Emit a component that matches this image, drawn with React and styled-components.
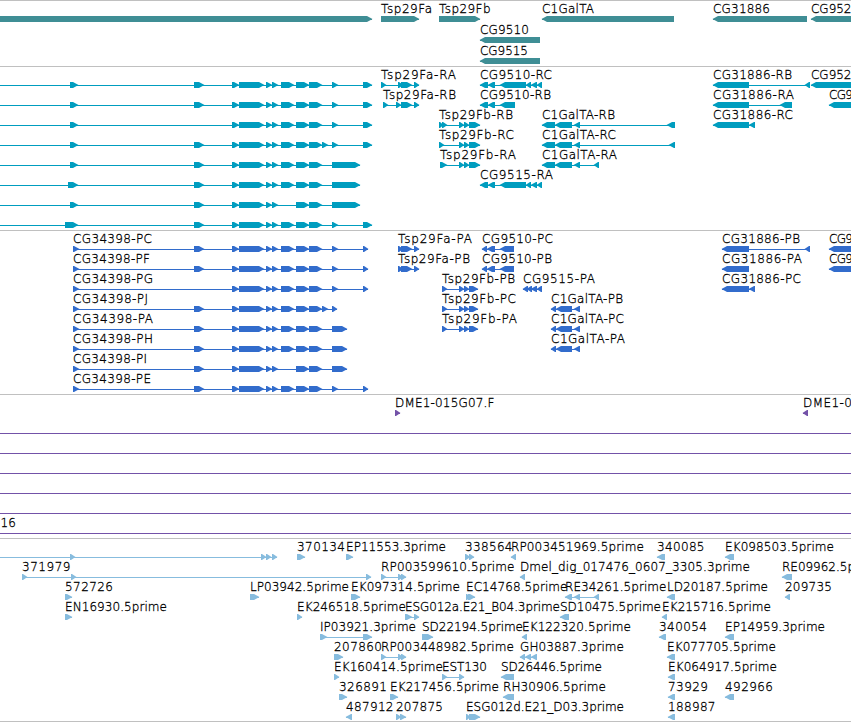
import React from 'react';
import styled, { createGlobalStyle } from 'styled-components';

const VIEW_WIDTH = 851;
const FONT = '200 12px "DejaVu Sans Light", "DejaVu Sans"';

// exons shared by the CG34398 transcripts
const CORE = [[232, 239], [239, 264], [266, 272], [272, 278], [281, 294], [296, 309], [309, 322]];
const CORE_SHORT = CORE.filter(([start]) => start !== 281);

// feature: name, label start, label end, strand, exons, line start (when it differs from the first exon)
const f = (name, x, end, strand, exons, from) => ({ name, x, end, strand, exons, from });
const main = (exons) => f('', 0, 0, 1, exons, -5);

const genes = [
  [
    f('', 0, 0, 1, [[-5, 372]]),
    f('Tsp29Fa', 381, 432, 1, [[381, 419]]),
    f('Tsp29Fb', 439, 490.5, 1, [[439, 480]]),
    f('C1GalTA', 542, 594, -1, [[542, 674]]),
    f('CG31886', 713, 770, -1, [[713, 807]]),
    f('CG952', 811, 851.5, -1, [[811, 870]]),
  ],
  [f('CG9510', 480, 529, -1, [[480, 540]])],
  [f('CG9515', 480, 528, -1, [[480, 540]])],
];

const fbTail = [[459, 464], [464, 469], [469, 480]];
const galHead = [[542, 555], [555, 572], [574, 580]];

const transcripts = [
  [
    main([[70, 78], [194, 204], ...CORE, [332, 338], [363, 372]]),
    f('Tsp29Fa-RA', 381, 456, 1, [[381, 386], [398, 403], [401, 412], [414, 419]]),
    f('CG9510-RC', 480, 552, -1, [[480, 488], [488, 495], [500, 526], [526, 531], [531, 537], [537, 542]]),
    f('CG31886-RB', 713, 792, -1, [[713, 749], [805, 810]]),
    f('CG952', 811, 851.5, -1, [[811, 870]]),
  ],
  [
    main([[70, 78], [194, 204], ...CORE, [332, 338], [363, 372]]),
    f('Tsp29Fa-RB', 383, 456, 1, [[383, 388], [396, 401], [401, 412], [414, 419]]),
    f('CG9510-RB', 480, 551, -1, [[480, 488], [488, 495], [500, 515]]),
    f('CG31886-RA', 713, 794, -1, [[713, 749], [780, 792]]),
    f('CG9', 829, 853, -1, [[829, 870]]),
  ],
  [
    main([[70, 78], ...CORE, [332, 338], [363, 372]]),
    f('Tsp29Fb-RB', 439, 513, 1, [[439, 443], [442, 447], ...fbTail]),
    f('C1GalTA-RB', 542, 615, -1, [...galHead, [667, 675]]),
    f('CG31886-RC', 713, 793, -1, [[713, 749], [749, 755]]),
  ],
  [
    main([[70, 78], [194, 204], ...CORE, [322, 328], [332, 338], [363, 372]]),
    f('Tsp29Fb-RC', 439, 514, 1, [[439, 444], ...fbTail]),
    f('C1GalTA-RC', 542, 616, -1, [...galHead, [669, 675]]),
  ],
  [
    main([[70, 78], [194, 204], ...CORE, [332, 360]]),
    f('Tsp29Fb-RA', 440, 516, 1, [[440, 447], ...fbTail]),
    f('C1GalTA-RA', 542, 617, -1, [...galHead, [594, 599]]),
  ],
  [
    main([[68, 78], [194, 204], ...CORE, [332, 360]]),
    f('CG9515-RA', 480, 553, -1, [[480, 488], [488, 495], [500, 526], [526, 531], [531, 537], [537, 542]]),
  ],
  [main([[70, 78], [194, 204], ...CORE_SHORT, [332, 360]])],
  [main([[65, 78], [194, 204], ...CORE, [332, 338], [363, 372]])],
];

const faCds = [[398, 403], [401, 412], [414, 419]];
const fbCds = [[442, 447], [459, 464], [464, 469], [469, 478]];
const galCds = [[551, 556], [556, 572], [574, 580]];

const proteins = [
  [
    f('CG34398-PC', 73, 152, 1, [[73, 79], [194, 204], ...CORE, [332, 338], [363, 368]]),
    f('Tsp29Fa-PA', 398, 472, 1, faCds),
    f('CG9510-PC', 482, 553, -1, [[482, 487], [487, 495], [500, 514]]),
    f('CG31886-PB', 722, 800, -1, [[722, 749], [805, 810]]),
    f('CG9', 829, 853, -1, [[829, 870]]),
  ],
  [
    f('CG34398-PF', 73, 150, 1, [[73, 79], [194, 204], ...CORE, [332, 338], [363, 368]]),
    f('Tsp29Fa-PB', 398, 470, 1, faCds),
    f('CG9510-PB', 482, 552, -1, [[482, 487], [487, 495], [500, 514]]),
    f('CG31886-PA', 722, 802, -1, [[722, 749]]),
    f('CG9', 829, 853, -1, [[829, 870]]),
  ],
  [
    f('CG34398-PG', 73, 153, 1, [[73, 79], ...CORE, [332, 338], [363, 368]]),
    f('Tsp29Fb-PB', 442, 515, 1, fbCds),
    f('CG9515-PA', 523, 595, -1, [[523, 528], [527, 532], [531, 537], [537, 542]]),
    f('CG31886-PC', 722, 801, -1, [[722, 749], [749, 755]]),
  ],
  [
    f('CG34398-PJ', 73, 148, 1, [[73, 79], [194, 204], ...CORE, [322, 328], [332, 337]]),
    f('Tsp29Fb-PC', 442, 516, 1, fbCds),
    f('C1GalTA-PB', 551, 623, -1, galCds),
  ],
  [
    f('CG34398-PA', 73, 153, 1, [[73, 79], [194, 204], ...CORE, [332, 347]]),
    f('Tsp29Fb-PA', 442, 517, 1, fbCds),
    f('C1GalTA-PC', 551, 624, -1, galCds),
  ],
  [
    f('CG34398-PH', 73, 153, 1, [[73, 79], [194, 204], ...CORE, [332, 347]]),
    f('C1GalTA-PA', 551, 625, -1, galCds),
  ],
  [f('CG34398-PI', 73, 147, 1, [[73, 79], [194, 204], ...CORE_SHORT, [332, 347]])],
  [f('CG34398-PE', 73, 151, 1, [[73, 79], [194, 204], ...CORE, [332, 338], [363, 368]])],
];

const through = () => f('', 0, 0, 1, [[860, 870]], -5);

const clones = [
  [
    f('DME1-015G07.F', 395, 494.5, 1, [[395, 400]]),
    f('DME1-0', 803, 852, -1, [[803, 808]]),
  ],
  [through()],
  [through()],
  [through()],
  [through()],
  [through()],
  [f('16', 0.5, 16, 1, [[860, 870]], -5)],
];

const ests = [
  [
    f('', 0, 0, 1, [[70, 75], [261, 266], [266, 271], [272, 277]], -5),
    f('370134', 297, 345, 1, [[297, 305]]),
    f('EP11553.3prime', 346, 446, 1, [[346, 353]]),
    f('338564', 465, 512.5, 1, [[465, 470], [469, 474]]),
    f('RP003451969.5prime', 511, 644, -1, [[511, 516]]),
    f('340085', 657, 704.5, -1, [[657, 665]]),
    f('EK098503.5prime', 725, 834, -1, [[725, 734]]),
  ],
  [
    f('371979', 22, 70.5, 1, [[22, 27], [71, 76], [366, 371]]),
    f('RP003599610.5prime', 381, 514.5, 1, [[381, 386], [398, 403], [401, 406]]),
    f('Dmel_dig_017476_0607_3305.3prime', 520, 750, -1, [[520, 525]]),
    f('RE09962.5p', 782, 855, -1, [[782, 792]]),
  ],
  [
    f('572726', 65, 113, 1, [[65, 72]]),
    f('LP03942.5prime', 250, 349, 1, [[250, 259]]),
    f('EK097314.5prime', 351, 460, 1, [[351, 360]]),
    f('EC14768.5prime', 466, 567.5, 1, [[466, 470], [468, 475]]),
    f('RE34261.5prime', 565, 666.5, -1, [[565, 572], [574, 580], [594, 599]]),
    f('LD20187.5prime', 667, 768, -1, [[667, 675]]),
    f('209735', 785, 832, -1, [[785, 790]]),
  ],
  [
    f('EN16930.5prime', 65, 167, 1, [[65, 72]]),
    f('EK246518.5prime', 297, 406, 1, [[297, 302]]),
    f('ESG012a.E21_B04.3prime', 405, 560, 1, [[405, 412], [414, 419]]),
    f('SD10475.5prime', 560, 661, -1, [[560, 569]]),
    f('EK215716.5prime', 662, 771, -1, [[662, 667]]),
  ],
  [
    f('IP03921.3prime', 320, 416, 1, [[320, 327], [363, 372]]),
    f('SD22194.5prime', 422, 523, 1, [[422, 433]]),
    f('EK122320.5prime', 522, 631, -1, [[522, 527]]),
    f('340054', 659, 707, -1, [[659, 666]]),
    f('EP14959.3prime', 725, 825, -1, [[725, 734]]),
  ],
  [
    f('207860', 334, 382, 1, [[334, 343]]),
    f('RP003448982.5prime', 381, 514, 1, [[381, 386], [398, 403], [401, 406]]),
    f('GH03887.3prime', 520, 624, -1, [[520, 525], [525, 531], [531, 537]]),
    f('EK077705.5prime', 667, 776, -1, [[667, 675]]),
  ],
  [
    f('EK160414.5prime', 334, 443, 1, [[334, 339]]),
    f('EST130', 442, 487, 1, [[442, 447], [459, 464]]),
    f('SD26446.5prime', 501, 602, -1, [[501, 514]]),
    f('EK064917.5prime', 668, 777, -1, [[668, 675]]),
  ],
  [
    f('326891', 339, 387, 1, [[339, 347]]),
    f('EK217456.5prime', 390, 499, 1, [[390, 398]]),
    f('RH30906.5prime', 503, 606, -1, [[503, 514]]),
    f('73929', 668, 708, -1, [[668, 675]]),
    f('492966', 725, 773, -1, [[725, 734]]),
  ],
  [
    f('487912', 346, 393.5, -1, [[346, 352]]),
    f('207875', 396, 443, 1, [[396, 401], [400, 406]]),
    f('ESG012d.E21_D03.3prime', 466, 624, 1, [[466, 470], [469, 480]]),
    f('188987', 668, 715.5, -1, [[668, 675]]),
  ],
];

const tracks = [
  { id: 'genes', color: '#3f8e95', rows: genes, rowHeight: 21, top: 1, bottom: 1 },
  { id: 'transcripts', color: '#009dbf', rows: transcripts, top: 1, bottom: 2 },
  { id: 'proteins', color: '#326ccc', rows: proteins, top: 1, bottom: 2 },
  { id: 'clones', color: '#7352a8', rows: clones, top: 1, bottom: 2 },
  { id: 'ests', color: '#87bcde', rows: ests, top: 1, bottom: 1 },
];

const ruler = document.createElement('canvas').getContext('2d');

// spreads the letters so that a name fills its reserved width
const fitSpacing = (name, width) => {
  ruler.font = FONT;
  return (width - ruler.measureText(name).width) / (name.length - 1);
};

const exonPoints = ([start, end], strand) => {
  const head = Math.min(6, end - start);
  if (strand > 0) {
    return `${start},0 ${end - head + 1},0 ${end + 0.5},3 ${end - head + 1},6 ${start},6`;
  }
  return `${end},0 ${start + head - 1},0 ${start - 0.5},3 ${start + head - 1},6 ${end},6`;
};

const Feature = ({ exons, strand, from }) => {
  const start = from ?? exons[0][0];
  const end = exons[exons.length - 1][1];
  return (
    <g>
      <rect x={start} y="3" width={end - start} height="1" />
      {exons.map((exon) => (
        <polygon key={exon[0]} points={exonPoints(exon, strand)} />
      ))}
    </g>
  );
};

const App = () => {
  return (
    <>
      <GlobalStyle />
      <Browser>
        {tracks.map((track) => (
          <Track key={track.id} $top={track.top} $bottom={track.bottom}>
            {track.rows.map((row, i) => (
              <Row key={i} $height={track.rowHeight}>
                {row.filter((item) => item.name).map((item) => (
                  <Label
                    key={item.name}
                    style={{ left: item.x, letterSpacing: fitSpacing(item.name, item.end - item.x) }}
                  >
                    {item.name}
                  </Label>
                ))}
                <Glyphs $color={track.color} width={VIEW_WIDTH} height="6">
                  {row.map((item, n) => (
                    <Feature key={n} {...item} />
                  ))}
                </Glyphs>
              </Row>
            ))}
          </Track>
        ))}
      </Browser>
    </>
  );
};

const GlobalStyle = createGlobalStyle`
  body {
    margin: 0;
    background: #fff;
  }
`;

const Browser = styled.main`
  display: flex;
  flex-direction: column;
  width: ${VIEW_WIDTH}px;
  height: 722px;
  overflow: hidden;
  box-sizing: border-box;
  border-bottom: 1px solid #c0c0c0;
  background: #fff;
`;

const Track = styled.section`
  display: flex;
  flex-direction: column;
  flex-shrink: 0;
  border-top: 1px solid #c0c0c0;
  padding: ${(props) => props.$top}px 0 ${(props) => props.$bottom}px;
`;

const Row = styled.div`
  position: relative;
  height: ${(props) => props.$height || 20}px;
  padding-top: 14px;
  box-sizing: border-box;
  overflow: hidden;
`;

/* names sit at the genome position of their feature */
const Label = styled.span`
  position: absolute;
  top: 0;
  font: ${FONT}, sans-serif;
  line-height: 14px;
  color: #000;
  -webkit-text-stroke: 0.3px #000;
  white-space: nowrap;
`;

const Glyphs = styled.svg`
  display: block;
  fill: ${(props) => props.$color};
`;

export default App;
